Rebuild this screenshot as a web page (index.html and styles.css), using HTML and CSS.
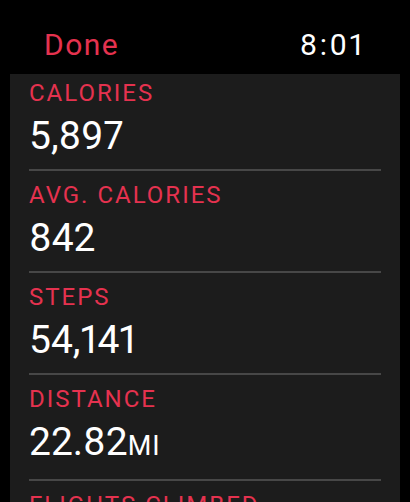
FILE: index.html
```html
<!DOCTYPE html>
<html lang="en">
	<head>
		<meta charset="utf-8">
		<title>Workout Summary</title>
		<meta name="viewport" content="width=device-width, initial-scale=1">
		<link rel="stylesheet" href="styles.css">
	</head>
	<body>
		<header class="bar">
			<span class="done">Done</span>
			<span class="clock">8:01</span>
		</header>
		<main class="panel">
			<ul class="stats">
				<li class="stat">
					<div class="label">CALORIES</div>
					<div class="value">5,897</div>
				</li>
				<li class="stat">
					<div class="label">AVG. CALORIES</div>
					<div class="value">842</div>
				</li>
				<li class="stat">
					<div class="label">STEPS</div>
					<div class="value">54,141</div>
				</li>
				<li class="stat">
					<div class="label">DISTANCE</div>
					<div class="value">22.82<span class="unit">MI</span></div>
				</li>
				<li class="stat">
					<div class="label">FLIGHTS CLIMBED</div>
					<div class="value">31</div>
				</li>
			</ul>
		</main>
	</body>
</html>
```

FILE: styles.css
```css
html, body {
	margin: 0;
	padding: 0;
	background: #000;
	height: 100%;
	overflow: hidden;
}
body {
	font-family: Roboto, "Liberation Sans", sans-serif;
	font-variant-numeric: proportional-nums;
	color: #fff;
	display: flex;
	flex-direction: column;
}
header.bar {
	display: flex;
	justify-content: space-between;
	padding: 27px 45px 12px 44px;
	font-size: 30px;
	line-height: 35px;
	letter-spacing: 2.5px;
}
header.bar .done {
	color: #e5324f;
	letter-spacing: 1.5px;
}
main.panel {
	flex: 1;
	margin: 0 10px;
	padding: 0 19px;
	background: #1c1c1c;
	overflow: hidden;
}
ul.stats {
	list-style: none;
	margin: 0;
	padding: 0;
}
li.stat {
	padding: 10px 0 10px;
	border-bottom: 2px solid #474747;
}
li.stat:first-child {
	padding-top: 5px;
}
.label {
	color: #e5324f;
	font-size: 24px;
	line-height: 28px;
	letter-spacing: 2px;
}
.value {
	margin-top: 6px;
	font-size: 39px;
	line-height: 46px;
}
.value .unit {
	font-size: 27px;
	letter-spacing: 1px;
}
```
